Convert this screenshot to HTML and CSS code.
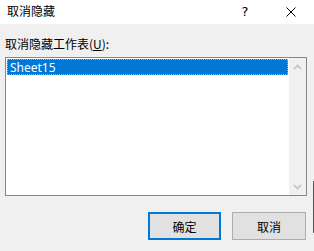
FILE: index.html
```html
<!DOCTYPE html>
<html lang="zh-CN">
<head>
<meta charset="utf-8">
<link rel="stylesheet" href="styles.css">
</head>
<body>
<div class="dialog">
  <div class="titlebar">
    <span class="title">取消隐藏</span>
    <div class="caption">
      <span class="cap-btn help">?</span>
      <span class="cap-btn close">
        <svg width="10" height="10" viewBox="0 0 10 10"><path d="M0.5 0.5 L9.5 9.5 M9.5 0.5 L0.5 9.5" stroke="#000" stroke-width="1" fill="none"/></svg>
      </span>
    </div>
  </div>
  <div class="content">
    <div class="label">取消隐藏工作表(<u>U</u>):</div>
    <div class="listbox">
      <div class="items">
        <div class="item selected">Sheet15</div>
      </div>
      <div class="scrollbar">
        <div class="arrow">
          <svg width="9" height="6" viewBox="0 0 9 6"><path d="M1 5 L4.5 1.5 L8 5" stroke="#c2c2c2" stroke-width="1.6" fill="none"/></svg>
        </div>
        <div class="arrow">
          <svg width="9" height="6" viewBox="0 0 9 6"><path d="M1 1 L4.5 4.5 L8 1" stroke="#c2c2c2" stroke-width="1.6" fill="none"/></svg>
        </div>
      </div>
    </div>
    <div class="buttons">
      <button class="btn default">确定</button>
      <button class="btn">取消</button>
    </div>
  </div>
  <div class="edge"></div>
</div>
</body>
</html>
```

FILE: styles.css
```css
html, body {
  margin: 0;
  padding: 0;
  background: #f0f0f0;
}
body {
  width: 314px;
  height: 251px;
  overflow: hidden;
  font-family: "Noto Sans", "Noto Sans CJK SC", sans-serif;
  font-size: 12px;
  color: #000;
}
.dialog {
  position: relative;
  width: 314px;
  height: 251px;
  display: flex;
  flex-direction: column;
}
.titlebar {
  height: 24px;
  background: #fff;
  display: flex;
  align-items: center;
  justify-content: space-between;
}
.title {
  padding-left: 7px;
  font-family: "Noto Sans CJK SC", sans-serif;
  font-size: 12px;
  line-height: 16px;
  margin-top: -3px;
}
.caption {
  display: flex;
  height: 24px;
}
.cap-btn {
  width: 46px;
  height: 24px;
  display: flex;
  align-items: center;
  justify-content: center;
}
.help {
  font-family: "DejaVu Sans", sans-serif;
  font-size: 13px;
  margin-top: -1px;
}
.close svg {
  display: block;
}
.content {
  padding: 12px 8px 0 5px;
  display: flex;
  flex-direction: column;
}
.label {
  font-family: "Noto Sans CJK SC", sans-serif;
  line-height: 16px;
  height: 16px;
  margin-bottom: 5px;
}
.label u {
  text-decoration-thickness: 1px;
  text-underline-offset: 1px;
}
.listbox {
  width: 300px;
  height: 137px;
  border: 1px solid #828790;
  background: #fff;
  display: flex;
}
.items {
  flex: 1;
  padding: 1px;
}
.item {
  height: 16px;
  line-height: 15px;
  padding-left: 2px;
  box-sizing: border-box;
}
.selected {
  background: #0078d7;
  color: #fff;
  border: 1px dotted #f0a33a;
}
.scrollbar {
  width: 17px;
  background: #f0f0f0;
  display: flex;
  flex-direction: column;
  justify-content: space-between;
}
.arrow {
  width: 17px;
  height: 17px;
  display: flex;
  align-items: center;
  justify-content: center;
}
.arrow svg {
  display: block;
}
.buttons {
  margin-top: 16px;
  display: flex;
  justify-content: flex-end;
  gap: 11px;
}
.btn {
  width: 74px;
  height: 28px;
  margin: 0;
  padding: 0;
  background: #e1e1e1;
  border: 1px solid #adadad;
  font-family: "Noto Sans CJK SC", sans-serif;
  font-size: 12px;
  color: #000;
  box-sizing: border-box;
}
.btn.default {
  width: 73px;
  border: 2px solid #0078d7;
}
.edge {
  position: absolute;
  right: 0;
  top: 181px;
  width: 1px;
  height: 52px;
  background: #555;
}
```
